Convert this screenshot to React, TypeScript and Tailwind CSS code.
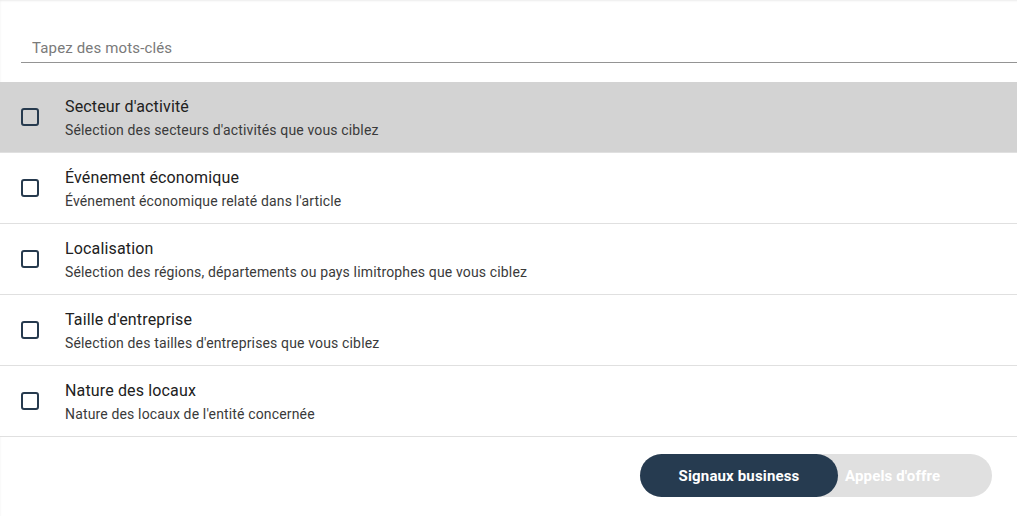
import { useState } from 'react';

const items = [
  { title: "Secteur d'activité", desc: "Sélection des secteurs d'activités que vous ciblez" },
  { title: 'Événement économique', desc: "Événement économique relaté dans l'article" },
  { title: 'Localisation', desc: 'Sélection des régions, départements ou pays limitrophes que vous ciblez' },
  { title: "Taille d'entreprise", desc: "Sélection des tailles d'entreprises que vous ciblez" },
  { title: 'Nature des locaux', desc: "Nature des locaux de l'entité concernée" },
];

export default function App() {
  const [checked, setChecked] = useState<boolean[]>(items.map(() => false));
  const [tab, setTab] = useState<'signaux' | 'appels'>('signaux');

  return (
    <div className="w-[1017px] h-[516px] bg-white overflow-hidden shadow-[inset_1px_2px_2px_-1px_rgba(0,0,0,0.08)]" style={{ fontFamily: 'Roboto, "Liberation Sans", sans-serif' }}>
      <div className="pt-[36px] pl-[21px]">
        <input
          placeholder="Tapez des mots-clés"
          className="w-full h-[26px] pl-[11px] pb-[2px] text-[15px] tracking-[0.15px] text-[#212121] placeholder:text-[#7a7a7a] border-b border-[#949494] outline-none"
        />
      </div>

      <div className="mt-[19px]">
        {items.map((it, i) => (
          <div
            key={it.title}
            onClick={() => setChecked(c => c.map((v, j) => (j === i ? !v : v)))}
            className={`flex items-center h-[71px] border-b border-[#e0e0e0] cursor-pointer ${i === 0 ? 'bg-[#d3d3d3] border-[#bdbdbd]' : 'bg-white'}`}
          >
            <div className="w-[65px] flex pl-[21px]">
              <div className={`w-[18px] h-[18px] rounded-[3px] border-2 border-[#263a4e] ${checked[i] ? 'bg-[#263a4e]' : ''}`} />
            </div>
            <div className="flex flex-col pt-[2px]">
              <span className="text-[16px] leading-[24px] tracking-[0.15px] text-[#212121]">{it.title}</span>
              <span className="text-[14px] leading-[22px] tracking-[0.15px] text-[#3a3a3a]">{it.desc}</span>
            </div>
          </div>
        ))}
      </div>

      <div className="flex justify-end pr-[25px] pt-[17px]">
        <div className="flex w-[352px] h-[43px] rounded-full bg-[#e0e0e0]">
          <button
            onClick={() => setTab('signaux')}
            className={`w-[198px] h-full pt-[2px] rounded-full text-[15px] tracking-[0.15px] font-bold text-white ${tab === 'signaux' ? 'bg-[#263b50]' : ''}`}
          >
            Signaux business
          </button>
          <button
            onClick={() => setTab('appels')}
            className={`flex-1 h-full pt-[2px] rounded-full text-[15px] tracking-[0.15px] font-bold text-white text-left pl-[7px] ${tab === 'appels' ? 'bg-[#263b50]' : ''}`}
          >
            Appels d'offre
          </button>
        </div>
      </div>
    </div>
  );
}
